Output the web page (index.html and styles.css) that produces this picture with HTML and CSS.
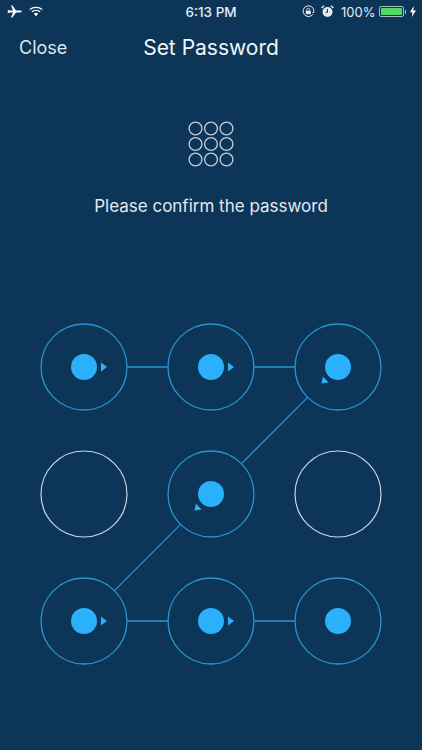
FILE: index.html
```html
<!DOCTYPE html>
<html lang="en">
<head>
    <meta charset="UTF-8">
    <meta name="viewport" content="width=device-width, initial-scale=1.0">
    <title>Set Password</title>
    <link rel="stylesheet" href="styles.css">
</head>
<body>
    <div class="statusbar">
        <div class="status-left">
            <svg class="ico-plane" width="15" height="13" viewBox="0 0 15 13"><path d="M0.3 5.4 L1.3 5 L3.4 5.6 L6 5.6 L4 0.4 L5.4 0.4 L9 5.6 L12.6 5.6 C14 5.6 14.8 6 14.8 6.5 C14.8 7 14 7.4 12.6 7.4 L9 7.4 L5.4 12.6 L4 12.6 L6 7.4 L3.4 7.4 L1.3 8 L0.3 7.6 L1.4 6.5 Z" fill="#fff"/></svg>
            <svg class="ico-wifi" width="14" height="11" viewBox="0 0 14 11"><path d="M0.8 3.6 C4.2 0.6 9.8 0.6 13.2 3.6 M2.9 5.8 C5.2 3.9 8.8 3.9 11.1 5.8" fill="none" stroke="#fff" stroke-width="1.3"/><path d="M4.9 7.6 C6.1 6.6 7.9 6.6 9.1 7.6 L7 10.4 Z" fill="#fff"/></svg>
        </div>
        <div class="status-time">6:13 PM</div>
        <div class="status-right">
            <svg width="13" height="13" viewBox="0 0 13 13"><path d="M10.9 9.3 A5.4 5.4 0 1 1 11.9 6.5" fill="none" stroke="#e6ebf0" stroke-width="1"/><path d="M10.2 6 L12.6 6 L11.4 8 Z" fill="#e6ebf0" transform="rotate(180 11.4 7)"/><rect x="3.8" y="5.6" width="5" height="3.6" fill="#e6ebf0"/><path d="M4.9 5.6 V4.6 A1.4 1.4 0 0 1 7.7 4.6 V5.6" fill="none" stroke="#e6ebf0" stroke-width="0.8"/></svg>
            <svg class="ico-alarm" width="13" height="13" viewBox="0 0 13 13"><circle cx="6.5" cy="7" r="5" fill="#e6ebf0"/><path d="M6.5 4 V7.3 H4.6" fill="none" stroke="#0d3558" stroke-width="1"/><path d="M0.6 3 L3 0.8 M12.4 3 L10 0.8" stroke="#e6ebf0" stroke-width="1.5"/></svg>
            <span class="status-pct">100%</span>
            <div class="battery"><div class="battery-fill"></div></div>
            <div class="battery-tip"></div>
            <svg class="ico-bolt" width="6" height="11" viewBox="0 0 6 11"><path d="M3.8 0 L0 6.2 L2.5 6.2 L1.8 11 L6 4.4 L3.3 4.4 Z" fill="#fff"/></svg>
        </div>
    </div>

    <div class="navbar">
        <span class="nav-close">Close</span>
        <span class="nav-title">Set Password</span>
    </div>

    <svg class="keypad" width="48" height="48" viewBox="0 0 48 48">
        <g fill="none" stroke="#c3d0dc" stroke-width="1.3">
            <circle cx="8.5" cy="8.5" r="6.4"/><circle cx="24" cy="8.5" r="6.4"/><circle cx="39.5" cy="8.5" r="6.4"/>
            <circle cx="8.5" cy="24" r="6.4"/><circle cx="24" cy="24" r="6.4"/><circle cx="39.5" cy="24" r="6.4"/>
            <circle cx="8.5" cy="39.5" r="6.4"/><circle cx="24" cy="39.5" r="6.4"/><circle cx="39.5" cy="39.5" r="6.4"/>
        </g>
    </svg>

    <p class="message">Please confirm the password</p>

    <svg class="pattern" width="422" height="360" viewBox="0 0 422 360">
        <g stroke="#2a93d0" stroke-width="1.3" fill="none">
            <path d="M127 47 H168 M254 47 H295 M307.6 77.4 L241.4 143.6 M180.6 204.4 L114.4 270.6 M127 301 H168 M254 301 H295"/>
            <circle cx="84" cy="47" r="43"/>
            <circle cx="211" cy="47" r="43"/>
            <circle cx="338" cy="47" r="43"/>
            <circle cx="211" cy="174" r="43"/>
            <circle cx="84" cy="301" r="43"/>
            <circle cx="211" cy="301" r="43"/>
            <circle cx="338" cy="301" r="43"/>
        </g>
        <g stroke="#c9d6e1" stroke-width="1.2" fill="none">
            <circle cx="84" cy="174" r="43"/>
            <circle cx="338" cy="174" r="43"/>
        </g>
        <g fill="#2bb0fb">
            <circle cx="84" cy="47" r="13"/>
            <circle cx="211" cy="47" r="13"/>
            <circle cx="338" cy="47" r="13"/>
            <circle cx="211" cy="174" r="13"/>
            <circle cx="84" cy="301" r="13"/>
            <circle cx="211" cy="301" r="13"/>
            <circle cx="338" cy="301" r="13"/>
            <path d="M101 42.5 L107 47 L101 51.5 Z"/>
            <path d="M228 42.5 L234 47 L228 51.5 Z"/>
            <path d="M101 296.5 L107 301 L101 305.5 Z"/>
            <path d="M228 296.5 L234 301 L228 305.5 Z"/>
            <path d="M323 56.5 L321.4 63.6 L328.5 62.4 Z"/>
            <path d="M196 183.5 L194.4 190.6 L201.5 189.4 Z"/>
        </g>
    </svg>
</body>
</html>
```

FILE: styles.css
```css
html,body{
    margin: 0;
    height: 100%;
    background-color: #0d3558;
}
body{
    display: flex;
    flex-direction: column;
    align-items: center;
    font-family: Inter, "Liberation Sans", sans-serif;
    overflow: hidden;
}
.statusbar{
    width: 100%;
    height: 23px;
    box-sizing: border-box;
    padding: 0 6px 0 7px;
    display: flex;
    align-items: center;
    justify-content: space-between;
    position: relative;
    color: #e6ebf0;
    font-size: 13.5px;
}
.status-left{
    display: flex;
    align-items: center;
    gap: 7px;
}
.status-time{
    position: absolute;
    left: 0;
    right: 0;
    text-align: center;
    font-weight: 500;
}
.status-right{
    display: flex;
    align-items: center;
}
.ico-alarm{
    margin-left: 6px;
}
.status-pct{
    margin-left: 7px;
    font-size: 13px;
}
.battery{
    width: 25px;
    height: 11px;
    margin-left: 3px;
    box-sizing: border-box;
    border: 1px solid #a9b8c4;
    border-radius: 2px;
    padding: 1px;
}
.battery-fill{
    height: 100%;
    background-color: #4cd964;
    border-radius: 1px;
}
.battery-tip{
    width: 1.5px;
    height: 4px;
    margin-left: 1px;
    background-color: #a9b8c4;
}
.ico-bolt{
    margin-left: 4px;
}
.navbar{
    width: 100%;
    height: 49px;
    box-sizing: border-box;
    border-bottom: 1px solid #0b2f4f;
    display: flex;
    align-items: center;
    justify-content: center;
    position: relative;
    color: #f2f5f7;
}
.nav-close{
    position: absolute;
    left: 19px;
    font-size: 18px;
    color: #dfe6ec;
}
.nav-title{
    font-size: 21px;
}
.keypad{
    margin-top: 48px;
    flex: none;
}
.message{
    margin: 26px 0 0 0;
    font-size: 17px;
    line-height: 24px;
    color: #e3e9ee;
}
.pattern{
    margin-top: 102px;
    flex: none;
}
```
